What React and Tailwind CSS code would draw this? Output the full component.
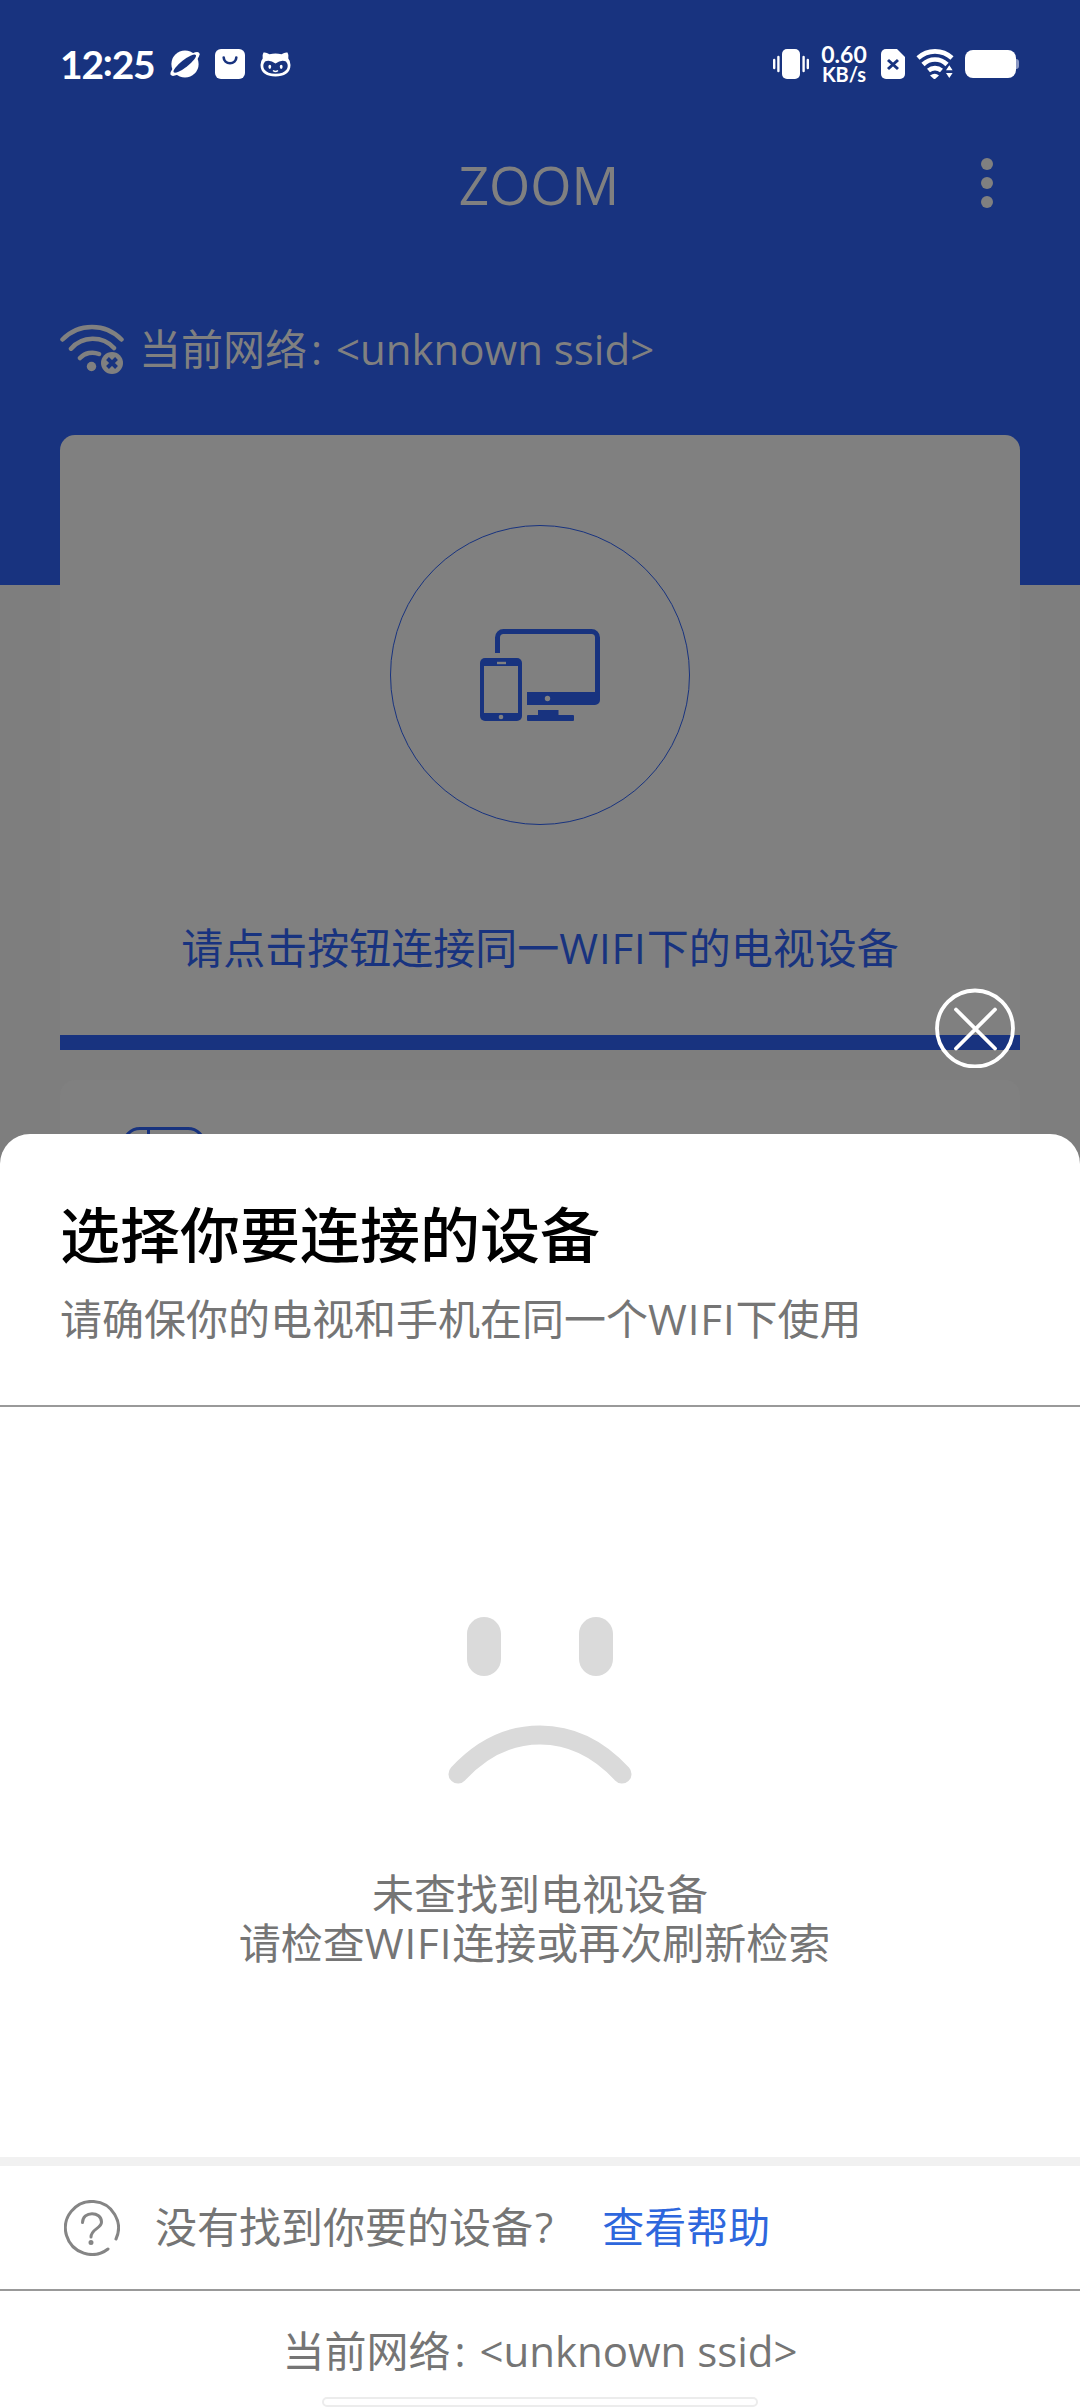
const cjk = "font-['Open_Sans','Noto_Sans_CJK_SC',sans-serif]";

function StatusBar() {
  return (
    <div className="flex h-[128px] items-center justify-between pl-[60px] pr-[61px] text-white">
      <div className="flex items-center">
        <span className="flex w-[96px] whitespace-nowrap font-['Lato',sans-serif] text-[39px] font-bold leading-[40px] tracking-[-1.2px]">
          12<span className="-mt-[3px]">:</span>25
        </span>
        <svg className="ml-[13px] h-[32px] w-[32px]" viewBox="0 0 32 32">
          <circle cx="16" cy="16" r="13.6" fill="#fff" />
          <ellipse cx="16" cy="16" rx="18" ry="5.4" transform="rotate(-38 16 16)" fill="#fff" />
          <ellipse cx="16" cy="15.6" rx="14" ry="3.6" transform="rotate(-38 16 16)" fill="#18337f" />
        </svg>
        <svg className="ml-[14px] h-[30px] w-[30px]" viewBox="0 0 30 30">
          <rect width="30" height="30" rx="6" fill="#fff" />
          <path d="M8.7 8.5a6.3 5.8 0 0 0 12.6 0" fill="none" stroke="#18337f" strokeWidth="2.6" strokeLinecap="round" />
        </svg>
        <svg className="ml-[15px] h-[25px] w-[31px]" viewBox="0 0 31 25">
          <path d="M3.5.6Q6 0 9.5 2.2Q15.5 1 21.5 2.2Q25 0 27.5.6Q29 3 28.3 6.5Q30.5 9 30.5 13C30.5 21 24 24.5 15.5 24.5S.5 21 .5 13Q.5 9 2.7 6.5Q2 3 3.5.6Z" fill="#fff" />
          <path d="M5 9.5q5-2 10.5 2q5.5-4 10.5-2q3 4 .6 8q-3 4.2-11.1 4.2T4.400 17.500Q2 13.500 5 9.500Z" fill="#18337f" />
          <ellipse cx="9.8" cy="14.8" rx="1.4" ry="2.1" fill="#fff" />
          <ellipse cx="21.2" cy="14.8" rx="1.4" ry="2.1" fill="#fff" />
          <path d="M13 18.5q2.5 2 5 0" stroke="#fff" strokeWidth="1.5" fill="none" />
        </svg>
      </div>
      <div className="flex items-center">
        <svg className="h-[32px] w-[36px]" viewBox="0 0 36 32">
          <rect x="9" y="1" width="18" height="30" rx="5" fill="#fff" />
          <path d="M1.2 12v8M5.4 9v14M30.6 9v14M34.8 12v8" stroke="#fff" strokeWidth="2.4" strokeLinecap="round" />
        </svg>
        <div className="ml-[10px] w-[50px] whitespace-nowrap text-center font-['Lato',sans-serif] text-[20px] font-bold leading-[19px]">
          <span className="text-[23px]">0.60</span>
          <br />
          KB/s
        </div>
        <svg className="ml-[12px] h-[30px] w-[24px]" viewBox="0 0 24 30">
          <path d="M5 0h11l8 8v17a5 5 0 0 1-5 5H5a5 5 0 0 1-5-5V5a5 5 0 0 1 5-5Z" fill="#fff" />
          <path d="m7 11 10 9m0-9-10 9" stroke="#18337f" strokeWidth="3" />
        </svg>
        <svg className="ml-[11px] h-[30px] w-[38px]" viewBox="0 0 38 30">
          <path d="M2 9a25 25 0 0 1 34 0M7 15.5a17 17 0 0 1 24 0M12.5 21.5a10 10 0 0 1 13 0" fill="none" stroke="#fff" strokeWidth="4.6" />
          <path d="M14 26.5q5-3.5 9 0L18.5 30.5Z" fill="#fff" />
          <path d="M28.5 22.5 33.5 14l5 8.500v2l-5 6-5-6Z" fill="#18337f" />
          <path d="M30 21.300l3.300-5 3.300 5ZM30 24h6.600l-3.300 5Z" fill="#fff" />
        </svg>
        <div className="ml-[11px] h-[28px] w-[51px] rounded-[8px] bg-white" />
        <div className="h-[10px] w-[3px] rounded-r bg-[#8b98c4]" />
      </div>
    </div>
  );
}

function WifiOff() {
  return (
    <svg className="h-[52px] w-[64px]" viewBox="0 0 64 52" fill="none" stroke="#808080">
      <path d="M2.5 15.5a41 41 0 0 1 59 0M11 24.7a29 29 0 0 1 43-.7M20 34a17 17 0 0 1 19-4" strokeWidth="4.5" strokeLinecap="round" />
      <circle cx="31.5" cy="42.5" r="4.7" fill="#808080" stroke="none" />
      <circle cx="52" cy="39" r="11" fill="#808080" stroke="none" />
      <path d="m47.5 34.5 9 9m0-9-9 9" stroke="#18337f" strokeWidth="4" />
    </svg>
  );
}

function DevicesIcon() {
  return (
    <svg className="h-[92px] w-[120px]" viewBox="0 0 120 92">
      <path d="M17.5 24V8.5a6 6 0 0 1 6-6h88a6 6 0 0 1 6 6V66" fill="none" stroke="#18337f" strokeWidth="5" />
      <path d="M47 63h73v8a5 5 0 0 1-5 5H47ZM58 83v-2h20.5v5H93a1 1 0 0 1 1 1v4a1 1 0 0 1-1 1H48a1 1 0 0 1-1-1v-4a1 1 0 0 1 1-1h10Z" fill="#18337f" />
      <circle cx="67.5" cy="69.5" r="2.7" fill="#808080" />
      <rect x="0" y="29" width="42" height="63" rx="5" fill="#18337f" />
      <rect x="4" y="37" width="34" height="47" fill="#808080" />
      <path d="M17 34h9" stroke="#808080" strokeWidth="2.4" />
      <circle cx="21" cy="88" r="2.3" fill="#808080" />
    </svg>
  );
}

function NetworkName() {
  return (
    <>
      当前网络<span className="ml-[4px] mr-[3px]">:</span> &lt;unknown ssid&gt;
    </>
  );
}

function Wifi() {
  return <span className="tracking-[0.9px]">WIFI</span>;
}

export default function App() {
  return (
    <div className={`${cjk} relative h-[2408px] w-[1080px] overflow-hidden bg-[#7e7e7e] text-[42px] leading-[50px]`}>
      <header className="h-[585px] bg-[#18337f] text-[#808080]">
        <StatusBar />
        <div className="flex h-[110px] items-center justify-between pl-[60px] pr-[87px]">
          <span className="w-[12px]" />
          <h1 className="ml-[25px] mt-[4px] text-[53px] font-[450] leading-[60px]">ZOOM</h1>
          <div className="flex flex-col gap-[7px]">
            <i className="block h-[12px] w-[12px] rounded-full bg-[#808080]" />
            <i className="block h-[12px] w-[12px] rounded-full bg-[#808080]" />
            <i className="block h-[12px] w-[12px] rounded-full bg-[#808080]" />
          </div>
        </div>
        <div className="mt-[86px] flex items-center pl-[60px]">
          <WifiOff />
          <span className="-mt-[2px] ml-[15px] whitespace-nowrap"><NetworkName /></span>
        </div>
      </header>

      <main className="relative -mt-[150px] px-[60px]">
        <section className="flex h-[615px] flex-col items-center rounded-t-[15px] border-b-[15px] border-[#18337f] bg-[#808080] pt-[90px]">
          <div className="flex h-[300px] w-[300px] items-center justify-center rounded-full border border-[#18337f]">
            <DevicesIcon />
          </div>
          <p className="mt-[98px] whitespace-nowrap text-[#18337f]">请点击按钮连接同一<Wifi />下的电视设备</p>
        </section>
        <section className="mt-[30px] h-[120px] rounded-t-[15px] bg-[#808080] pl-[62px] pt-[47px]">
          <div className="h-[60px] w-[84px] rounded-[18px] border-[3px] border-[#18337f] pl-[22px]">
            <div className="h-full w-[3px] bg-[#18337f]" />
          </div>
        </section>
      </main>

      <button className="absolute left-[935px] top-[988px]" aria-label="关闭">
        <svg className="h-[80px] w-[80px]" viewBox="0 0 80 80" fill="none" stroke="#fff" strokeWidth="3.8" strokeLinecap="round">
          <circle cx="40" cy="40.5" r="38" />
          <path d="m21 21.5 39 39m0-39-39 39" />
        </svg>
      </button>

      <div className="absolute inset-x-0 bottom-0 flex h-[1274px] flex-col rounded-t-[30px] bg-white text-[#757575]">
        <div className="h-[273px] border-b-2 border-[#999] pl-[60px] pt-[66px]">
          <h2 className="text-[60px] font-medium leading-[70px] text-black">选择你要连接的设备</h2>
          <p className="mt-[24px]">请确保你的电视和手机在同一个<Wifi />下使用</p>
        </div>
        <div className="flex h-[750px] flex-col items-center pt-[207px]">
          <svg className="h-[172px] w-[188px]" viewBox="0 0 188 172">
            <rect x="21" y="3" width="34" height="59" rx="17" fill="#dadada" />
            <rect x="133" y="3" width="34" height="59" rx="17" fill="#dadada" />
            <path d="M12 160Q48 121 94 121T176 160" fill="none" stroke="#dadada" strokeWidth="19" strokeLinecap="round" />
          </svg>
          <p className="mt-[83px] whitespace-pre text-center leading-[49px]">
            {"未查找到电视设备\n请检查"}<Wifi />{"连接或再次刷新检索 "}
          </p>
        </div>
        <div className="h-[9px] bg-[#f1f1f1]" />
        <div className="flex h-[125px] items-center border-b-2 border-[#999] pl-[64px]">
          <svg className="h-[56px] w-[56px]" viewBox="0 0 56 56" fill="none" stroke="#858585" strokeWidth="3" strokeLinecap="round">
            <path d="M52 39A26.5 26.5 0 1 0 44 49" />
            <path d="M18.5 22.5C18.5 10.5 37.5 11 37.5 22C37.5 28.5 27 29 27 37" />
            <circle cx="27" cy="42.5" r="1" fill="#858585" />
          </svg>
          <span className="-mt-[2px] ml-[35px]">没有找到你要的设备<span className="ml-[2px]">?</span></span>
          <a className="-mt-[2px] ml-[49px] text-[#2e67dd]">查看帮助</a>
        </div>
        <div className="flex flex-1 flex-col items-center">
          <p className="mt-[35px] whitespace-nowrap"><NetworkName /></p>
          <div className="mt-[21px] h-[10px] w-[436px] rounded-[5px] border-2 border-[#ececec] bg-white" />
        </div>
      </div>
    </div>
  );
}
